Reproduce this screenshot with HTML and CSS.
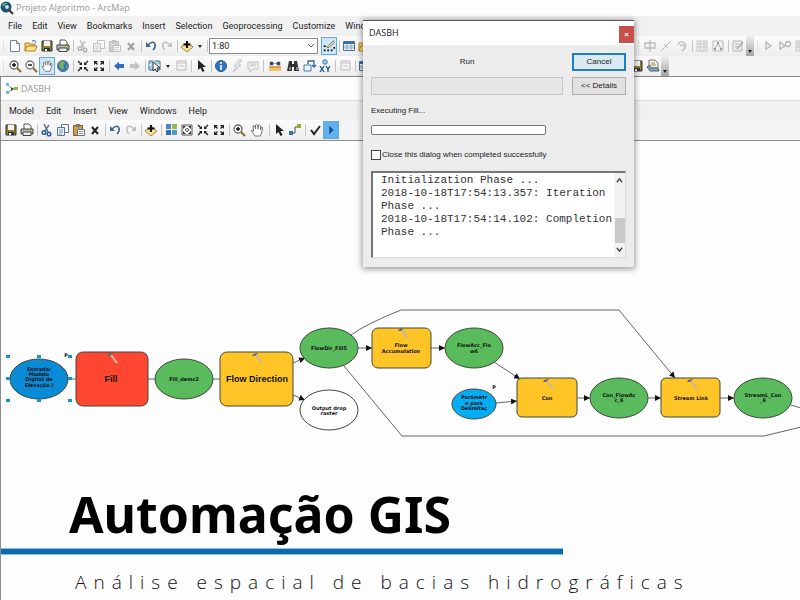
FILE: index.html
```
<!DOCTYPE html>
<html lang="pt">
<head>
<meta charset="utf-8">
<title>Projeto Algoritmo - ArcMap</title>
<link rel="stylesheet" href="styles.css">
</head>
<body>
<svg class="sprite" aria-hidden="true">
  <symbol id="new" viewBox="0 0 16 16"><path d="M3.500 2.500h6l3 3v8h-9z" fill="#fff" stroke="#71839c"/><path d="M9.500 2.500v3h3" fill="#dbe5f2" stroke="#71839c"/></symbol>
  <symbol id="open" viewBox="0 0 16 16"><path d="M2 13V5h4l1 1h5v3" fill="#f4cf6a" stroke="#b08422"/><path d="M2 13l2-5h10l-2 5z" fill="#ffe28a" stroke="#b08422"/><path d="M9 3q3-2 4 2" fill="none" stroke="#3a65b0"/></symbol>
  <symbol id="save" viewBox="0 0 16 16"><path d="M3 3h10v10H3z" fill="#8b8031" stroke="#303030"/><path d="M5 3h6v5H5z" fill="#f4f4f4"/><path d="M5 10h6v3H5z" fill="#333"/><path d="M6 11h2v2H6z" fill="#fff"/></symbol>
  <symbol id="print" viewBox="0 0 16 16"><path d="M5 7V2h5l2 2v3" fill="#fff" stroke="#555"/><path d="M2 7h12v5H2z" fill="#b9b9ad" stroke="#444"/><path d="M4 10h8v3.500H4z" fill="#eee" stroke="#444"/><path d="M11 8h2v1h-2z" fill="#d6b500"/></symbol>
  <symbol id="cut" viewBox="0 0 16 16"><path d="M5 2l4 8M10 3L6 9" stroke="#60718a" stroke-width="1.500"/><circle cx="5" cy="10.500" r="1.800" fill="none" stroke="#2e5f9e" stroke-width="1.500"/><circle cx="10" cy="12" r="1.800" fill="none" stroke="#2e5f9e" stroke-width="1.500"/></symbol>
  <symbol id="copy" viewBox="0 0 16 16"><path d="M6.500 2.500h7v8h-7z" fill="#fff" stroke="#5d7591"/><path d="M2.500 5.500h7v8h-7z" fill="#e9f1fb" stroke="#5d7591"/><path d="M4 8h4M4 10h4M4 12h3" stroke="#7b98bd"/></symbol>
  <symbol id="paste" viewBox="0 0 16 16"><path d="M2.500 3.500h9v10h-9z" fill="#d39b4b" stroke="#815d25"/><path d="M5 2h4v3H5z" fill="#777"/><path d="M6.500 7.500h7v6h-7z" fill="#fff" stroke="#5d7591"/><path d="M8 9.500h4M8 11.500h4" stroke="#7b98bd"/></symbol>
  <symbol id="del" viewBox="0 0 16 16"><path d="M5 5l6 7M11 5l-6 7" stroke="#222" stroke-width="2"/></symbol>
  <symbol id="undo" viewBox="0 0 16 16"><path d="M5 7q5-5 7-1 1 3-2 6" fill="none" stroke="#3c6698" stroke-width="1.600"/><path d="M3 4v5h5z" fill="#3c6698"/></symbol>
  <symbol id="redo" viewBox="0 0 16 16"><path d="M11 7q-5-5-7-1-1 3 2 6" fill="none" stroke="#c0c0c0" stroke-width="1.600"/><path d="M13 4v5H8z" fill="#c0c0c0"/></symbol>
  <symbol id="add" viewBox="0 0 16 16"><path d="M8 4l6 5-6 5-6-5z" fill="#f7e08c" stroke="#a08a45"/><path d="M8 3v7M4.500 6.500h7" stroke="#111" stroke-width="2"/></symbol>
  <symbol id="zin" viewBox="0 0 16 16"><circle cx="7" cy="7" r="4" fill="#f7f7f7" stroke="#666" stroke-width="1.300"/><path d="M10 10l4 4" stroke="#8b6637" stroke-width="2"/><path d="M5 7h4M7 5v4" stroke="#111" stroke-width="1.400"/></symbol>
  <symbol id="zout" viewBox="0 0 16 16"><circle cx="7" cy="7" r="4" fill="#f7f7f7" stroke="#777" stroke-width="1.300"/><path d="M10 10l4 4" stroke="#8b6637" stroke-width="2"/><path d="M5 7h4" stroke="#111" stroke-width="1.400"/></symbol>
  <symbol id="hand" viewBox="0 0 16 16"><path d="M6 14L2.500 9q0-2 2 0L4 4q1-1 2 1l.5 2L6.500 3q1-1 2 0L9 7l.5-4q1-1 2 .5V8l1-3q1.500 0 1 2l-1 4-1 3z" fill="#fff" stroke="#777"/></symbol>
  <symbol id="globe" viewBox="0 0 16 16"><circle cx="8" cy="8" r="5.500" fill="#3575bd" stroke="#5a7088"/><path d="M5 4q4-2 5 1l-2 2 1 3-2 2-3-4zM11 8l2-1-1 4z" fill="#79b15a"/></symbol>
  <symbol id="in" viewBox="0 0 16 16"><path d="M3 3l3 3M13 3l-3 3M3 13l3-3M13 13l-3-3" stroke="#222" stroke-width="1.400"/><path d="M7 4v3H4zM9 4v3h3zM7 12V9H4zM9 12V9h3z" fill="#222"/></symbol>
  <symbol id="out" viewBox="0 0 16 16"><path d="M4 4l2.500 2.500M12 4L9.500 6.500M4 12l2.500-2.500M12 12L9.500 9.500" stroke="#222" stroke-width="1.400"/><path d="M3 7V3h4zM13 7V3H9zM3 9v4h4zM13 9v4H9z" fill="#222"/></symbol>
  <symbol id="back" viewBox="0 0 16 16"><path d="M3 8l5-4.500v2.500h5v4H8v2.500z" fill="#2c6fc4"/></symbol>
  <symbol id="fwd" viewBox="0 0 16 16"><path d="M13 8L8 3.500v2.500H3v4h5v2.500z" fill="#c2c2c2"/></symbol>
  <symbol id="selfeat" viewBox="0 0 16 16"><path d="M2 3h11v9H2z" fill="#9fd5e6" stroke="#4b7280"/><path d="M7 2v11M2 7h11" stroke="#fff"/><path d="M6 4v9l2-2 2 3 1-1-1-3h3z" fill="#fff" stroke="#333"/></symbol>
  <symbol id="box" viewBox="0 0 16 16"><path d="M4 3h9v9H4z" fill="#f4f4f4" stroke="#b9b9b9"/><path d="M4 5h9M6 8h5" stroke="#c5c5c5"/></symbol>
  <symbol id="ptr" viewBox="0 0 16 16"><path d="M5 2v10l2.500-2 2 4 2-1-2-4H13z" fill="#222"/></symbol>
  <symbol id="info" viewBox="0 0 16 16"><circle cx="8" cy="8" r="5.500" fill="#2f74c0" stroke="#2a5a96"/><path d="M8 4v2M8 7v5" stroke="#fff" stroke-width="1.600"/></symbol>
  <symbol id="bolt" viewBox="0 0 16 16"><path d="M10 2L5 8h3l-4 6 8-7H9l4-5z" fill="#eee" stroke="#c5c5c5"/></symbol>
  <symbol id="note" viewBox="0 0 16 16"><path d="M3 4h10v7H8l-3 3v-3H3z" fill="#f3f3f3" stroke="#c0c0c0"/><path d="M5 6h6M5 8h6" stroke="#c0c0c0"/></symbol>
  <symbol id="ruler" viewBox="0 0 16 16"><path d="M2 8h12v5H2z" fill="#f3c16d"/><path d="M3 4h3v3H3zM10 4h3v3h-3zM6 5.500h4" fill="#345" stroke="#456" stroke-width=".5"/><path d="M2 9h12" stroke="#b6803c"/></symbol>
  <symbol id="bino" viewBox="0 0 16 16"><path d="M4 3h3v3h2V3h3l2 10h-5V9H7v4H2z" fill="#333"/><path d="M4 9h2v3H4zM11 9h2v3h-2z" fill="#888"/></symbol>
  <symbol id="route" viewBox="0 0 16 16"><path d="M3 7h7v6H3z" fill="#eaf4fc" stroke="#457aa8"/><path d="M7 6V3h6v5M11 7l2 2 2-2" fill="none" stroke="#2c6b9e" stroke-width="1.300"/></symbol>
  <symbol id="xy" viewBox="0 0 16 16"><circle cx="8" cy="4" r="2.200" fill="#a9d3ed" stroke="#276ea5"/><path d="M3 8l4 6M7 8l-4 6M9 8l2 3 2-3M11 11v3" fill="none" stroke="#174f86" stroke-width="1.300"/></symbol>
  <symbol id="table" viewBox="0 0 16 16"><path d="M2.500 3.500h11v9h-11z" fill="#fff" stroke="#4c6d91"/><path d="M3 4h10v2H3z" fill="#2d72b8"/><path d="M3 8h10M3 10h10M6 6v6M10 6v6" stroke="#86a5c5"/></symbol>
  <symbol id="edit" viewBox="0 0 16 16"><path d="M3 8l4 2 5-5" fill="none" stroke="#777"/><path d="M6 9l7-7 1 2-6 6z" fill="#e9d9a0" stroke="#777"/><path d="M2 7h2v2H2zM2 12h2v2H2zM6 12h2v2H6zM10 12h2v2h-2zM13 9h2v2h-2z" fill="#111"/></symbol>
  <symbol id="split" viewBox="0 0 16 16"><path d="M3 5h10v5H3zM8 2v12" fill="none" stroke="#bbb" stroke-width="1.300"/></symbol>
  <symbol id="slash" viewBox="0 0 16 16"><path d="M3 13L13 3M6 6l4 4" stroke="#bbb"/></symbol>
  <symbol id="rot" viewBox="0 0 16 16"><path d="M4 7q1-4 5-3 4 2 2 6l-3 3M6 8q3-3 4 1" fill="none" stroke="#bbb" stroke-width="1.300"/></symbol>
  <symbol id="grid" viewBox="0 0 16 16"><path d="M3 3h10v10H3zM3 6h10M3 9h10M6 3v10M10 3v10" fill="#eee" stroke="#c8c8c8"/></symbol>
  <symbol id="sketch" viewBox="0 0 16 16"><path d="M3 3h10v10H3z" fill="#f3f3f3" stroke="#bbb"/><path d="M5 11l3-6 3 6" fill="none" stroke="#aaa"/><path d="M7 4h2v2H7zM4 10h2v2H4zM10 10h2v2h-2z" fill="#999"/></symbol>
  <symbol id="form" viewBox="0 0 16 16"><path d="M3 3h9v10H3zM5 6h4M5 9h3" fill="#eee" stroke="#b5b5b5"/><path d="M7 11l6-7" stroke="#aaa" stroke-width="1.500"/></symbol>
  <symbol id="flag" viewBox="0 0 16 16"><path d="M5 12V4l5 4-5 3" fill="none" stroke="#b5b5b5" stroke-width="1.300"/></symbol>
  <symbol id="flag2" viewBox="0 0 16 16"><path d="M3 12V4l5 4-5 3" fill="none" stroke="#b5b5b5" stroke-width="1.300"/><circle cx="11" cy="6" r="2.500" fill="none" stroke="#b5b5b5" stroke-width="1.300"/></symbol>
  <symbol id="layers" viewBox="0 0 16 16"><path d="M4 2h6l3 3v5H4z" fill="#f5f2dc" stroke="#777"/><path d="M6 5h4M6 7h5" stroke="#8a8a7a"/><path d="M2 9l3-2v3h8l1 3H5z" fill="#8ba9b8" stroke="#476170"/></symbol>
  <symbol id="tiles" viewBox="0 0 16 16"><path d="M3 2h5v5H3z" fill="#4c87bc"/><path d="M9 2h5v5H9z" fill="#91bc4b"/><path d="M3 8h5v5H3z" fill="#2874b5"/><path d="M9 8h5v5H9z" fill="#4c9bce"/></symbol>
  <symbol id="fit" viewBox="0 0 16 16"><path d="M3 3h10v10H3z" fill="#fff" stroke="#555"/><circle cx="8" cy="8" r="1.500" fill="none" stroke="#555"/><path d="M4 7V4h3zM9 4h3v3zM4 9v3h3zM12 9v3H9z" fill="#333"/></symbol>
  <symbol id="link" viewBox="0 0 16 16"><path d="M5 11h3V5h4" fill="none" stroke="#555"/><path d="M2 9h4v4H2z" fill="#2d70b6"/><path d="M10 2h4v4h-4z" fill="#9ca936"/></symbol>
  <symbol id="check" viewBox="0 0 16 16"><path d="M4 8l3 4 6-8" fill="none" stroke="#222" stroke-width="2"/></symbol>
  <symbol id="play" viewBox="0 0 16 16"><path d="M6 3l5 5-5 5z" fill="#124f9d"/></symbol>
</svg>

<header class="app">
  <div class="titlebar">
    <svg class="logo" viewBox="0 0 14 14"><circle cx="6" cy="6" r="5.500" fill="#1c5477"/><path d="M3 2q4-1 5 2L6 6 2 5z" fill="#4eaf78"/><circle cx="7" cy="6" r="2.500" fill="#c8e5ee" stroke="#246"/><path d="M9 9l4 4" stroke="#333" stroke-width="2"/></svg>
    <span>Projeto Algoritmo - ArcMap</span>
  </div>
  <nav class="menu">
    <button>File</button><button>Edit</button><button>View</button><button>Bookmarks</button><button>Insert</button><button>Selection</button><button>Geoprocessing</button><button>Customize</button><button>Wind</button>
  </nav>
  <div class="bar">
    <div class="group"><i class="grip"></i>
      <button aria-label="New"><svg><use href="#new"/></svg></button><button aria-label="Open"><svg><use href="#open"/></svg></button><button aria-label="Save"><svg><use href="#save"/></svg></button><button aria-label="Print"><svg><use href="#print"/></svg></button><i class="sep"></i>
      <button class="dim" aria-label="Cut"><svg><use href="#cut"/></svg></button><button class="dim" aria-label="Copy"><svg><use href="#copy"/></svg></button><button class="dim" aria-label="Paste"><svg><use href="#paste"/></svg></button><button class="dim" aria-label="Delete"><svg><use href="#del"/></svg></button><i class="sep"></i>
      <button aria-label="Undo"><svg><use href="#undo"/></svg></button><button aria-label="Redo"><svg><use href="#redo"/></svg></button><i class="sep"></i>
      <button aria-label="Add data"><svg><use href="#add"/></svg></button><button class="caret" aria-label="Add data options"></button><i class="sep"></i>
      <span class="scale"><select aria-label="Map scale"><option>1:80</option></select><svg viewBox="0 0 8 8"><path d="M1 2l3 3 3-3" fill="none" stroke="#555"/></svg></span>
      <button class="on" aria-label="Editor"><svg><use href="#edit"/></svg></button><i class="sep"></i>
      <button aria-label="Table"><svg><use href="#table"/></svg></button><button aria-label="Catalog"><svg><use href="#open"/></svg></button>
    </div>
    <div class="group right"><i class="grip"></i>
      <button aria-label="Split"><svg><use href="#split"/></svg></button><button aria-label="Cut line"><svg><use href="#slash"/></svg></button><button aria-label="Rotate"><svg><use href="#rot"/></svg></button><i class="sep"></i>
      <button aria-label="Attributes"><svg><use href="#grid"/></svg></button><button aria-label="Sketch"><svg><use href="#sketch"/></svg></button><i class="sep"></i>
      <button aria-label="Create features"><svg><use href="#form"/></svg></button><button class="more" aria-label="Toolbar options"></button><i class="grip"></i>
      <button aria-label="Start"><svg><use href="#flag"/></svg></button><button aria-label="Trace"><svg><use href="#flag2"/></svg></button><button aria-label="Next"><svg><use href="#grid"/></svg></button>
    </div>
  </div>
  <div class="bar">
    <div class="group"><i class="grip"></i>
      <button aria-label="Zoom in"><svg><use href="#zin"/></svg></button><button aria-label="Zoom out"><svg><use href="#zout"/></svg></button><button class="on" aria-label="Pan"><svg><use href="#hand"/></svg></button><button aria-label="Full extent"><svg><use href="#globe"/></svg></button><i class="sep"></i>
      <button aria-label="Fixed zoom in"><svg><use href="#in"/></svg></button><button aria-label="Fixed zoom out"><svg><use href="#out"/></svg></button><i class="sep"></i>
      <button aria-label="Back"><svg><use href="#back"/></svg></button><button aria-label="Forward"><svg><use href="#fwd"/></svg></button><i class="sep"></i>
      <button aria-label="Select features"><svg><use href="#selfeat"/></svg></button><button class="caret" aria-label="Select options"></button><button aria-label="Clear selection"><svg><use href="#box"/></svg></button><i class="sep"></i>
      <button aria-label="Pointer"><svg><use href="#ptr"/></svg></button><i class="sep"></i>
      <button aria-label="Identify"><svg><use href="#info"/></svg></button><button aria-label="Hyperlink"><svg><use href="#bolt"/></svg></button><button aria-label="HTML popup"><svg><use href="#note"/></svg></button><i class="sep"></i>
      <button class="wide" aria-label="Measure"><svg><use href="#ruler"/></svg></button><button aria-label="Find"><svg><use href="#bino"/></svg></button><button aria-label="Find route"><svg><use href="#route"/></svg></button><button aria-label="Go to XY"><svg><use href="#xy"/></svg></button><i class="sep"></i>
      <button aria-label="Time slider"><svg><use href="#box"/></svg></button><i class="sep"></i><button aria-label="Viewer"><svg><use href="#table"/></svg></button>
    </div>
    <div class="group right">
      <button aria-label="Save edits"><svg><use href="#save"/></svg></button><button aria-label="Layers"><svg><use href="#layers"/></svg></button><button class="more" aria-label="Toolbar options"></button>
    </div>
  </div>
</header>

<main class="model">
  <div class="titlebar">
    <svg class="logo" viewBox="0 0 14 14"><path d="M3 3l4 4M3 11l4-4h3" fill="none" stroke="#8aa86b"/><path d="M1 1h3v3H1zM1 9h3v3H1z" fill="#79b4df"/><path d="M6 5l3 2-3 2z" fill="#444"/><path d="M9 5h4v3H9z" fill="#8dbb42"/></svg>
    <span>DASBH</span>
  </div>
  <nav class="menu">
    <button>Model</button><button>Edit</button><button>Insert</button><button>View</button><button>Windows</button><button>Help</button>
  </nav>
  <div class="bar">
    <div class="group inner">
      <button aria-label="Save"><svg><use href="#save"/></svg></button><button aria-label="Print"><svg><use href="#print"/></svg></button><i class="sep"></i>
      <button aria-label="Cut"><svg><use href="#cut"/></svg></button><button aria-label="Copy"><svg><use href="#copy"/></svg></button><button aria-label="Paste"><svg><use href="#paste"/></svg></button><button aria-label="Delete"><svg><use href="#del"/></svg></button><i class="sep"></i>
      <button aria-label="Undo"><svg><use href="#undo"/></svg></button><button aria-label="Redo"><svg><use href="#redo"/></svg></button><i class="sep"></i>
      <button aria-label="Add data"><svg><use href="#add"/></svg></button><i class="sep"></i>
      <button aria-label="Auto layout"><svg><use href="#tiles"/></svg></button><button aria-label="Full extent"><svg><use href="#fit"/></svg></button><button aria-label="Fixed zoom in"><svg><use href="#in"/></svg></button><button aria-label="Fixed zoom out"><svg><use href="#out"/></svg></button><i class="sep"></i>
      <button aria-label="Zoom in"><svg><use href="#zin"/></svg></button><button class="wide" aria-label="Pan"><svg><use href="#hand"/></svg></button><i class="sep"></i>
      <button aria-label="Select"><svg><use href="#ptr"/></svg></button><button aria-label="Connect"><svg><use href="#link"/></svg></button><i class="sep"></i>
      <button aria-label="Validate"><svg><use href="#check"/></svg></button><button class="on run" aria-label="Run"><svg><use href="#play"/></svg></button>
    </div>
  </div>

  <svg class="diagram" viewBox="1 141 799 339" role="img" aria-label="DASBH model">
    <defs>
      <marker id="arrow" viewBox="0 0 6 6" refX="6" refY="3" markerWidth="6" markerHeight="6" markerUnits="userSpaceOnUse" orient="auto"><path d="M0 0l6 3-6 3z" fill="#111" stroke="none"/></marker>
      <g id="hammer"><path d="M2 3l6 8" stroke="#c4b8a8" stroke-width="2"/><path d="M-2 4q1-3 6-3l-3 3z" fill="#666"/></g>
    </defs>
    <g class="wires">
      <path d="M68 379h8M148 379h8M213 379h8"/>
      <path class="to" d="M293 363l12-5"/><path class="to" d="M293 395l12 5"/><path class="to" d="M358 348h14"/><path class="to" d="M431 348h14"/><path class="to" d="M494 362l26 17"/><path class="to" d="M496 403l21-2"/><path class="to" d="M577 398h13"/><path class="to" d="M648 398h13"/><path class="to" d="M720 398h14"/>
      <path class="to" d="M351 335q15-11 50-25h218l56 68"/>
      <path d="M344 366l58 70h362l37-9M791 405l10 3"/>
    </g>
    <g class="shape">
      <ellipse cx="39" cy="379" rx="29" ry="20" fill="#0a8bd8"/>
      <rect x="76" y="352" width="72" height="54" rx="7" fill="#ff4630"/>
      <ellipse cx="184" cy="379" rx="29" ry="20" fill="#5abb5d"/>
      <rect x="220" y="352" width="73" height="54" rx="7" fill="#ffc425"/>
      <ellipse cx="329" cy="348" rx="29" ry="20" fill="#5abb5d"/>
      <ellipse cx="329" cy="410" rx="29" ry="20" fill="#fff"/>
      <rect x="372" y="328" width="59" height="40" rx="6" fill="#ffc425"/>
      <ellipse cx="474" cy="348" rx="29" ry="20" fill="#5abb5d"/>
      <ellipse cx="474" cy="404" rx="22" ry="15" fill="#05adf5"/>
      <rect x="517" y="378" width="60" height="39" rx="5" fill="#ffc425"/>
      <ellipse cx="619" cy="398" rx="29" ry="20" fill="#5abb5d"/>
      <rect x="661" y="378" width="59" height="39" rx="5" fill="#ffc425"/>
      <ellipse cx="763" cy="398" rx="29" ry="20" fill="#5abb5d"/>
    </g>
    <path d="M6 355h4v3H6zM37 355h4v3h-4zM68 355h4v3h-4zM6 377h4v3H6zM68 377h4v3h-4zM6 399h4v3H6zM37 399h4v3h-4zM68 399h4v3h-4z" fill="#1695cb"/>
    <use href="#hammer" x="109" y="352"/><use href="#hammer" x="254" y="352"/><use href="#hammer" x="400" y="327"/><use href="#hammer" x="545" y="378"/><use href="#hammer" x="689" y="378"/>
    <g class="small">
      <text x="39" y="371">Entrada:</text><text x="39" y="376">Modelo</text><text x="39" y="381">Digital de</text><text x="39" y="387">Elevação I</text>
      <text x="66" y="357">P</text><text x="184" y="381">Fill_demc2</text>
      <text x="329" y="350">FlowDir_Fill5</text>
      <text x="329" y="410">Output drop</text><text x="329" y="415">raster</text>
      <text x="401" y="347">Flow</text><text x="401" y="353">Accumulation</text>
      <text x="474" y="347">FlowAcc_Flo</text><text x="474" y="353">w6</text>
      <text x="494" y="389">P</text>
      <text x="474" y="399">Parâmetr</text><text x="474" y="405">o para</text><text x="474" y="410">Delimitaç</text>
      <text x="547" y="400">Con</text><text x="619" y="397">Con_FlowAc</text><text x="619" y="402">c_6</text>
      <text x="691" y="400">Stream Link</text><text x="763" y="397">StreamL_Con</text><text x="763" y="402">_6</text>
    </g>
    <g class="large"><text x="111" y="382">Fill</text><text x="257" y="382">Flow Direction</text></g>
  </svg>

  <section class="caption">
    <h1>Automação GIS</h1>
    <div class="rule"></div>
    <p>Análise espacial de bacias hidrográficas</p>
  </section>
</main>

<div class="dialog" role="dialog" aria-labelledby="dlg">
  <div class="head"><span id="dlg">DASBH</span><button class="close" aria-label="Close">×</button></div>
  <div class="body">
    <div class="grid">
      <span class="status">Run</span><button class="btn primary">Cancel</button>
      <div class="strip"></div><button class="btn">&lt;&lt; Details</button>
    </div>
    <label class="executing" for="prog">Executing Fill...</label>
    <progress id="prog" value="0" max="100"></progress>
    <label class="tick"><input type="checkbox">Close this dialog when completed successfully</label>
    <div class="logbox">
      <textarea readonly aria-label="Messages">Initialization Phase ...
2018-10-18T17:54:13.357: Iteration
Phase ...
2018-10-18T17:54:14.102: Completion
Phase ...</textarea>
      <div class="scroll"><svg viewBox="0 0 8 8"><path d="M1 6l3-4 3 4" fill="none" stroke="#444" stroke-width="1.500"/></svg><i></i><svg viewBox="0 0 8 8"><path d="M1 2l3 4 3-4" fill="none" stroke="#444" stroke-width="1.500"/></svg></div>
    </div>
  </div>
</div>
</body>
</html>
```
FILE: styles.css
```
* { box-sizing: border-box; }
body {
  margin: 0;
  min-height: 100vh;
  display: flex;
  flex-direction: column;
  overflow: hidden;
  background: #fdfdfd;
  color: #222;
  font: 9px/12px Roboto, "Noto Sans", sans-serif;
}
button { border: 0; padding: 0; background: none; color: inherit; font: inherit; }
.sprite { display: none; }

.app { border-bottom: 1px solid #858585; background: #f4f4f4; }
.titlebar {
  display: flex;
  align-items: center;
  gap: 2px;
  height: 16px;
  background: #fdfdfd;
  color: #999;
  font: 9px/12px "Open Sans", sans-serif;
}
.logo { width: 14px; height: 14px; }
.menu {
  display: flex;
  align-items: center;
  gap: 10px;
  height: 20px;
  padding-left: 8px;
  background: #f1f1f1;
}
.bar { display: flex; height: 20px; }
.group {
  display: flex;
  align-items: center;
  height: 20px;
  background: linear-gradient(#fcfcfc, #ededed);
}
.group button { flex: none; width: 16px; height: 18px; }
.group button svg { display: block; width: 16px; height: 16px; margin: auto; }
.group .wide { width: 20px; }
.group .dim { opacity: 0.4; filter: grayscale(1); }
.group .on { background: #cfe6f7; border: 1px solid #5fa9dc; }
.group .on svg { width: 14px; height: 14px; }
.group .run { background: #63b0ee; }
.right { margin-left: 262px; }
.bar + .bar .right { margin-left: 256px; }
.sep { flex: none; width: 4px; height: 12px; background: linear-gradient(#c5c5c5, #c5c5c5) center / 1px 100% no-repeat; }
.grip { flex: none; width: 7px; height: 12px; background: radial-gradient(#bbb 1px, transparent 1px) center / 3px 3px repeat-y; }
.group .caret { width: 10px; }
.caret::before, .more::before {
  content: "";
  display: block;
  width: 0;
  margin: auto;
  border: 2px solid transparent;
  border-top: 3px solid #222;
  border-bottom: 0;
}
.group .more { width: 8px; height: 20px; padding-top: 11px; background: linear-gradient(#eee, #a5a5a5); }
.scale {
  display: flex;
  align-items: center;
  width: 109px;
  height: 16px;
  margin-right: 3px;
  border: 1px solid #8c8c8c;
  background: #fff;
}
.scale select { flex: 1; height: 14px; padding: 0 2px; border: 0; appearance: none; background: none; font: inherit; color: inherit; }
.scale svg { width: 8px; height: 8px; margin-right: 2px; }

.model { flex: 1; border-left: 1px solid #8e8e8e; }
.model .titlebar { height: 24px; padding-left: 4px; border-bottom: 1px solid #ddd; }
.model .menu { height: 19px; gap: 12px; }
.model .bar { height: 21px; background: #f4f4f4; border-bottom: 1px solid #8c8c8c; }
.inner { padding-left: 2px; }

.diagram { display: block; width: 100%; }
.wires { fill: none; stroke: #666; }
.to { marker-end: url(#arrow); }
.shape { stroke: #3d4a3d; }
.small, .large { text-anchor: middle; fill: #111; font-weight: 700; }
.small { font-family: "DejaVu Sans", sans-serif; font-size: 5px; }
.large { font-family: "Liberation Sans", sans-serif; font-size: 9px; }

.caption h1 {
  margin: 0;
  padding-left: 68px;
  color: #000;
  font: 700 50px/68px "Noto Sans", sans-serif;
}
.rule { width: 562px; max-width: 100%; height: 7px; background: #0b6aaf; border-top: 1px solid #8fc0e0; border-bottom: 1px solid #8fc0e0; }
.caption p {
  margin: 0;
  padding: 14px 0 0 74px;
  color: #111;
  font: 300 19px/26px "Open Sans", sans-serif;
  letter-spacing: 7px;
  white-space: nowrap;
}

.dialog {
  position: absolute;
  top: 20px;
  left: 363px;
  width: 271px;
  border-top: 1px solid #555;
  background: #ececec;
  box-shadow: 0 1px 6px 1px rgba(0, 0, 0, 0.4);
  font: 8px/12px "Liberation Sans", sans-serif;
}
.head { display: flex; align-items: center; justify-content: space-between; height: 24px; padding-left: 6px; background: #fff; }
.head span { font: 9px/12px "Open Sans", sans-serif; }
.close { align-self: flex-end; width: 15px; height: 17px; margin-bottom: 2px; background: #c8504b; color: #fff; font-weight: 700; }
.body { padding: 8px 8px 9px; }
.grid { display: grid; grid-template-columns: 1fr 54px; grid-auto-rows: 18px; gap: 6px 9px; }
.status { align-self: center; text-align: center; }
.dialog .btn { border: 1px solid #adadad; background: #e1e1e1; }
.dialog .primary { border: 2px solid #1e7fc2; background: #dbe9f3; }
.strip { border: 1px solid #c8c8c8; background: #e6e6e6; }
.executing { display: block; margin: 10px 0 8px; }
progress { display: block; appearance: none; width: 175px; height: 10px; border: 1px solid #777; border-radius: 2px; background: #fff; }
progress::-webkit-progress-bar { background: transparent; }
.tick { display: flex; align-items: center; gap: 1px; margin: 14px 0 10px; }
.tick input { appearance: none; width: 10px; height: 10px; margin: 0; border: 1px solid #444; background: #fff; }
.logbox { display: flex; height: 87px; border: 1px solid #ddd; border-top: 2px solid #777; border-left: 2px solid #777; background: #fff; }
.logbox textarea {
  flex: 1;
  min-width: 0;
  padding: 1px 0 0 8px;
  border: 0;
  resize: none;
  overflow: hidden;
  background: none;
  color: #333;
  font: 11px/13px "Liberation Mono", monospace;
  white-space: pre;
}
.scroll { display: flex; flex-direction: column; align-items: center; width: 11px; padding: 4px 0; background: #f2f2f2; }
.scroll svg { width: 7px; height: 7px; }
.scroll i { width: 10px; height: 25px; margin: auto 0 3px; background: #c9c9c9; }
```
